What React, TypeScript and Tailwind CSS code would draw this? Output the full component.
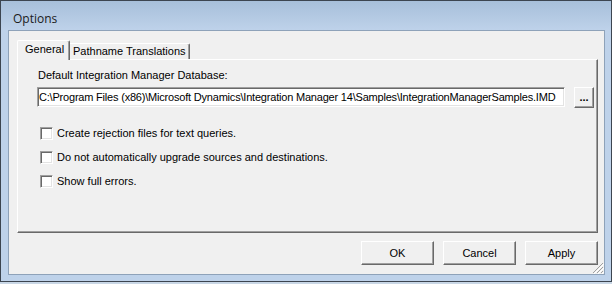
import React from "react";

const raised =
  "border border-t-white border-l-white border-r-[#696969] border-b-[#696969] shadow-[inset_-1px_-1px_0_#a0a0a0]";
const sunken =
  "border border-t-[#a0a0a0] border-l-[#a0a0a0] border-r-white border-b-white shadow-[inset_1px_1px_0_#696969,inset_-1px_-1px_0_#e3e3e3]";

function Check({ label }: { label: string }) {
  return (
    <div className="flex items-center h-[13px] gap-[4px]">
      <div className={`w-[13px] h-[13px] bg-white box-border ${sunken}`} />
      <span className="leading-[13px] whitespace-nowrap">{label}</span>
    </div>
  );
}

function Btn({ label }: { label: string }) {
  return (
    <div
      className={`w-[73px] h-[24px] box-border bg-[#f0f0f0] flex items-center justify-center leading-[13px] ${raised}`}
    >
      {label}
    </div>
  );
}

export default function App() {
  return (
    <div className="w-[612px] h-[284px] bg-[#c9d7e6] font-['Liberation_Sans',Arial,sans-serif] text-[11px] text-black overflow-hidden">
      <div className="h-[282px] border border-[#3c4550] box-border flex flex-col bg-[#bed2ea]">
        <div className="h-[29px] shrink-0 pl-[12px] pt-[10px] bg-gradient-to-b from-[#a7bfda] to-[#bed2ea]">
          <span className="font-['Open_Sans',sans-serif] text-[12px] leading-[16px] text-[#1b1b1b]">
            Options
          </span>
        </div>
        <div className="flex-1 pl-[7px] pr-[6px] pb-[6px] flex flex-col">
          <div className="relative flex-1 border border-[#8ea2b9] bg-[#f0f0f0] pl-[8px] pr-[6px] pt-[9px] flex flex-col">
            {/* tabs */}
            <div className="flex items-end h-[19px]">
              <div className="relative z-10 -mb-[1px] w-[53px] h-[20px] box-border bg-[#f0f0f0] border-t border-l border-r border-t-white border-l-white border-r-[#696969] shadow-[inset_-1px_0_0_#a0a0a0] rounded-tl-[2px] rounded-tr-[2px] pl-[7px] pt-[2px] leading-[13px]">
                General
              </div>
              <div className="w-[120px] h-[16px] box-border bg-[#f0f0f0] border-t border-r border-t-white border-r-[#696969] shadow-[inset_-1px_0_0_#a0a0a0] rounded-tr-[2px] pl-[3px] pt-[1px] leading-[13px]">
                Pathname Translations
              </div>
            </div>
            {/* panel */}
            <div className={`h-[174px] box-border bg-[#f0f0f0] ${raised} pl-[19px] pt-[9px]`}>
              <div className="leading-[13px] h-[13px] pl-[1px]">Default Integration Manager Database:</div>
              <div className="flex items-start mt-[5px] h-[21px]">
                <div className={`w-[528px] h-[20px] box-border bg-white ${sunken} pl-[1px] flex items-center leading-[13px] whitespace-nowrap overflow-hidden tracking-[-0.2px]`}>
                  C:\Program Files (x86)\Microsoft Dynamics\Integration Manager 14\Samples\IntegrationManagerSamples.IMD
                </div>
                <div className={`ml-[9px] w-[20px] h-[21px] box-border bg-[#f0f0f0] ${raised} flex items-center justify-center font-bold leading-[13px] pb-[1px]`}>
                  ...
                </div>
              </div>
              <div className="mt-[19px] pl-[3px] flex flex-col gap-[11px]">
                <Check label="Create rejection files for text queries." />
                <Check label="Do not automatically upgrade sources and destinations." />
                <Check label="Show full errors." />
              </div>
            </div>
            {/* buttons */}
            <div className="mt-[8px] flex justify-end gap-[9px]">
              <Btn label="OK" />
              <Btn label="Cancel" />
              <Btn label="Apply" />
            </div>
            {/* size grip */}
            <svg className="absolute right-0 bottom-0" width="12" height="12" viewBox="0 0 12 12">
              <line x1="11" y1="1" x2="1" y2="11" stroke="#a0a0a0" />
              <line x1="12" y1="2" x2="2" y2="12" stroke="#ffffff" />
              <line x1="11" y1="5" x2="5" y2="11" stroke="#a0a0a0" />
              <line x1="12" y1="6" x2="6" y2="12" stroke="#ffffff" />
              <line x1="11" y1="9" x2="9" y2="11" stroke="#a0a0a0" />
              <line x1="12" y1="10" x2="10" y2="12" stroke="#ffffff" />
            </svg>
          </div>
        </div>
      </div>
    </div>
  );
}
